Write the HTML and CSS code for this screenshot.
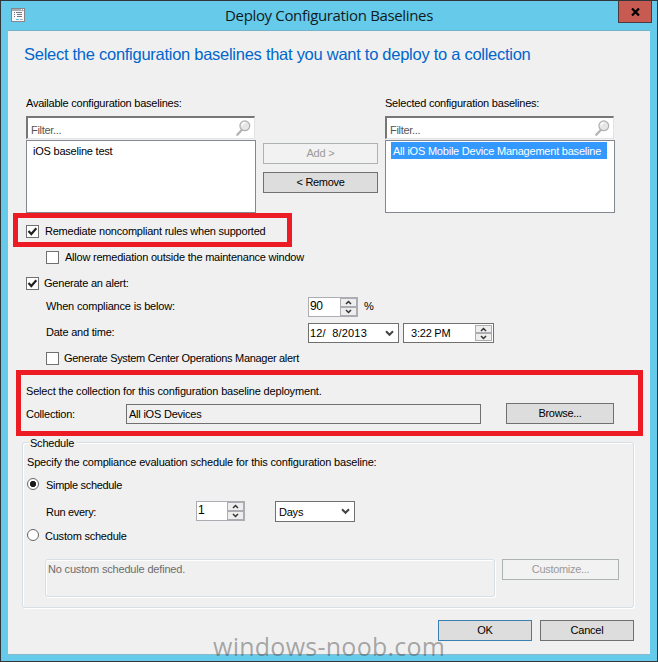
FILE: index.html
```
<!DOCTYPE html>
<html lang="en">
<head>
<meta charset="utf-8">
<title>Deploy Configuration Baselines</title>
<link rel="stylesheet" href="styles.css">
</head>
<body>
<div class="window">
  <header class="titlebar">
    <svg class="app-icon" width="14" height="14" viewBox="0 0 14 14" shape-rendering="crispEdges">
      <rect x=".5" y=".5" width="13" height="13" fill="#f8f8f8" stroke="#85858b"/>
      <path fill="#aaaab0" d="M1 1h12v2H1z"/><path fill="#fff" d="M10 1h1v1h-1zM12 1h1v1h-1z"/>
      <path fill="#77778b" d="M3 4h1v1H3zM5 4h6v1H5zM3 6h1v1H3zM6 6h5v1H6zM3 8h1v1H3zM6 8h5v1H6z"/>
      <path fill="#4fc5ea" d="M5 11h3v1H5z"/><path fill="#b0b0b4" d="M9 11h3v1H9z"/>
    </svg>
    <h1 class="title">Deploy Configuration Baselines</h1>
    <button class="close" aria-label="Close"><svg width="9" height="8" viewBox="0 0 9 8"><path d="M1 0.5 8 7.5M8 .5 1 7.5" stroke="#000" stroke-width="2.2"/></svg></button>
  </header>
  <main class="content">
    <h2 class="heading">Select the configuration baselines that you want to deploy to a collection</h2>

    <section class="pickers">
      <div class="picker">
        <div class="picker-label">Available configuration baselines:</div>
        <div class="filter"><span class="tight">Filter...</span>
          <svg width="15" height="16" viewBox="0 0 15 16"><path d="M6 9.7 1.3 14.7" stroke="#b5b5b5" stroke-width="2.4" stroke-linecap="round"/><circle cx="8.8" cy="5.8" r="4.9" fill="#e6e6e6" stroke="#b0b0b0" stroke-width="1.2"/><path d="M6 5.5Q6.5 3 9 2.8" fill="none" stroke="#fff" stroke-width="1.5"/></svg>
        </div>
        <div class="list"><span class="item first">iOS baseline test</span></div>
      </div>
      <div class="transfer">
        <button class="btn disabled">Add &gt;</button>
        <button class="btn tight">&lt; Remove</button>
      </div>
      <div class="picker">
        <div class="picker-label">Selected configuration baselines:</div>
        <div class="filter"><span class="tight">Filter...</span>
          <svg width="15" height="16" viewBox="0 0 15 16"><path d="M6 9.7 1.3 14.7" stroke="#b5b5b5" stroke-width="2.4" stroke-linecap="round"/><circle cx="8.8" cy="5.8" r="4.9" fill="#e6e6e6" stroke="#b0b0b0" stroke-width="1.2"/><path d="M6 5.5Q6.5 3 9 2.8" fill="none" stroke="#fff" stroke-width="1.5"/></svg>
        </div>
        <div class="list"><span class="item selected">All iOS Mobile Device Management baseline</span></div>
      </div>
    </section>

    <section class="options">
      <label class="row"><span class="check"><svg width="11" height="11" viewBox="0 0 11 11"><path d="M1.5 5 4.3 8 9.3 2.3" fill="none" stroke="#222" stroke-width="2.2"/></svg></span>Remediate noncompliant rules when supported</label>
      <label class="row nested"><span class="check"></span>Allow remediation outside the maintenance window</label>
      <label class="row alert"><span class="check"><svg width="11" height="11" viewBox="0 0 11 11"><path d="M1.5 5 4.3 8 9.3 2.3" fill="none" stroke="#222" stroke-width="2.2"/></svg></span>Generate an alert:</label>
      <div class="row field">
        <span class="field-label wide">When compliance is below:</span>
        <span class="spinner"><span class="value">90</span><span class="arrows"><i><svg width="7" height="5" viewBox="0 0 7 5"><path d="M1 4 3.5 1.5 6 4"/></svg></i><i><svg width="7" height="5" viewBox="0 0 7 5"><path d="M1 1 3.5 3.5 6 1"/></svg></i></span></span>
        <span class="percent">%</span>
      </div>
      <div class="row field">
        <span class="field-label">Date and time:</span>
        <span class="date"><span>12/&nbsp; 8/2013</span><svg class="chevron" width="9" height="7" viewBox="0 0 9 7"><path d="M1 1.3 4.5 4.8 8 1.3"/></svg></span>
        <span class="time"><span>3:22 PM</span><span class="arrows"><i><svg width="7" height="5" viewBox="0 0 7 5"><path d="M1 4 3.5 1.5 6 4"/></svg></i><i><svg width="7" height="5" viewBox="0 0 7 5"><path d="M1 1 3.5 3.5 6 1"/></svg></i></span></span>
      </div>
      <label class="row nested scom tight"><span class="check"></span>Generate System Center Operations Manager alert</label>
    </section>

    <section class="collection">
      <p class="wide">Select the collection for this configuration baseline deployment.</p>
      <div class="collection-row">
        <span class="collection-label">Collection:</span>
        <span class="readonly">All iOS Devices</span>
        <button class="btn tight browse">Browse...</button>
      </div>
    </section>

    <section class="schedule">
      <div class="legend">Schedule</div>
      <p class="wide">Specify the compliance evaluation schedule for this configuration baseline:</p>
      <label class="radio-row tight"><span class="radio on"></span>Simple schedule</label>
      <div class="run-row">
        <span class="run-label tight">Run every:</span>
        <span class="spinner"><span class="value">1</span><span class="arrows"><i><svg width="7" height="5" viewBox="0 0 7 5"><path d="M1 4 3.5 1.5 6 4"/></svg></i><i><svg width="7" height="5" viewBox="0 0 7 5"><path d="M1 1 3.5 3.5 6 1"/></svg></i></span></span>
        <span class="select">Days<svg class="chevron" width="9" height="7" viewBox="0 0 9 7"><path d="M1 1.3 4.5 4.8 8 1.3"/></svg></span>
      </div>
      <label class="radio-row custom"><span class="radio"></span>Custom schedule</label>
      <div class="custom-row">
        <div class="custom-box wide">No custom schedule defined.</div>
        <button class="btn disabled tight customize">Customize...</button>
      </div>
    </section>

    <footer class="actions">
      <button class="btn default">OK</button>
      <button class="btn">Cancel</button>
    </footer>
  </main>
  <div class="mark mark-remediate"></div>
  <div class="mark mark-collection"></div>
  <div class="watermark">windows-noob.com</div>
</div>
</body>
</html>
```
FILE: styles.css
```
* { box-sizing: border-box; }
body { margin: 0; }
h1, h2, p { margin: 0; font-weight: normal; }

.window {
  position: relative;
  width: 658px;
  height: 662px;
  border: 1px solid #30363a;
  background: #66caea;
  padding: 0 7px;
  font: 11px/14px "Liberation Sans", Arial, sans-serif;
  letter-spacing: -0.22px;
  color: #000;
}
.tight { letter-spacing: -0.31px; }
.wide { letter-spacing: -0.175px; }

.titlebar { display: flex; height: 29px; padding-left: 3px; }
.app-icon { margin-top: 7px; }
.title {
  flex: 1;
  padding: 4px 0 0 200px;
  font: 15px/21px "Open Sans", sans-serif;
  letter-spacing: -0.34px;
  color: #101c22;
}
.close {
  width: 34px;
  height: 22px;
  margin-right: -2px;
  padding: 0;
  border: 1px solid #4d3a41;
  border-top: 0;
  background: #c75b52;
  display: flex;
  justify-content: center;
  align-items: center;
}

.content {
  height: 625px;
  background: #f0f0f0;
  border-top: 1px solid #74b3ca;
  border-bottom: 1px solid #8ab9c9;
  padding-left: 14px;
}
.heading {
  height: 64px;
  padding: 13px 0 0 2px;
  font-size: 16.5px;
  line-height: 20px;
  letter-spacing: -0.27px;
  color: #0066cc;
}

.pickers { display: flex; padding-left: 4px; height: 124px; }
.picker { width: 230px; }
.picker-label { height: 21px; padding-top: 1px; }
.filter {
  display: flex;
  justify-content: space-between;
  width: 229px;
  height: 23px;
  padding: 5px 3px 0 3px;
  border: 2px solid;
  border-color: #777 #e3e3e3 #e3e3e3 #777;
  border-right-width: 1px;
  border-bottom-width: 1px;
  background: #fff;
  color: #555;
}
.filter svg { margin-top: -3px; }
.list {
  height: 73px;
  margin-top: 1px;
  padding: 1px 5px;
  border: 1px solid #828790;
  background: #fff;
}
.item { display: inline-block; height: 17px; line-height: 18px; padding: 0 5px 0 2px; }
.item.first { padding-left: 1px; }
.item.selected { background: #3399ff; color: #fff; width: 216px; }

.transfer { width: 115px; margin: 48px 7px 0; display: flex; flex-direction: column; gap: 8px; }
.btn {
  height: 21px;
  padding: 0;
  border: 1px solid #707070;
  background: #ddd;
  color: #000;
  font-family: inherit;
  font-size: 11px;
  line-height: 19px;
  letter-spacing: -0.21px;
}
.btn.tight { letter-spacing: -0.31px; }
.btn.disabled { background: #f2f2f2; border-color: #adb2b5; color: #9a9a9a; }
.btn.default { border-color: #3c7fb1; }

.options { padding-left: 4px; }
.row { display: flex; gap: 6px; height: 26px; padding-top: 6px; line-height: 13px; }
.check {
  width: 13px;
  height: 13px;
  border: 1px solid #707070;
  background: #fff;
}
.check svg { display: block; }
.row.nested { padding-left: 20px; }
.row.alert { gap: 5px; }
.row.scom { padding-top: 3px; height: 21px; gap: 5px; }
.row.field { gap: 0; padding: 0 0 0 20px; }
.field-label { width: 262px; padding-top: 3px; }

.spinner {
  display: flex;
  width: 50px;
  height: 20px;
  border: 1px solid #abadb3;
  background: #fff;
}
.value { flex: 1; padding: 2px 0 0 1px; font-size: 12px; line-height: 13px; letter-spacing: -0.3px; }
.arrows {
  width: 17px;
  height: 18px;
  background: #abadb3;
  padding: 1px;
  display: flex;
  flex-direction: column;
  gap: 2px;
}
.arrows i { flex: 1; display: flex; align-items: center; justify-content: center; background: #eee; }
.arrows path { fill: none; stroke: #333; stroke-width: 1.5; }
.percent { padding: 3px 0 0 6px; }
.date, .time { display: flex; height: 20px; border: 1px solid #707070; background: #fff; line-height: 19px; }
.date { width: 91px; padding: 0 4px 0 1px; justify-content: space-between; align-items: center; letter-spacing: 0.17px; }
.time { width: 91px; margin-left: 4px; padding: 0 1px 0 7px; justify-content: space-between; }
.time .arrows { margin-top: 1px; height: 16px; }
.chevron path { fill: none; stroke: #444; stroke-width: 2; }

.collection { padding: 14px 0 0 4px; height: 66px; }
.collection-row { display: flex; margin-top: 5px; }
.collection-label { width: 100px; padding-top: 4px; }
.readonly { width: 355px; height: 20px; margin-top: 1px; padding: 2px; border: 1px solid #707070; }
.browse { width: 108px; margin-left: 25px; }

.schedule {
  width: 612px;
  height: 166px;
  margin-top: 6px;
  padding-left: 4px;
  border: 1px solid #d5dfe5;
  border-radius: 3px;
  box-shadow: inset 1px 1px #fff, 1px 1px #fff;
}
.legend { width: 48px; height: 14px; margin: -7px 0 0 2px; padding-left: 1px; background: #f0f0f0; }
.schedule p { margin-top: 5px; }
.radio-row { display: flex; gap: 7px; height: 14px; margin-top: 9px; line-height: 15px; }
.radio {
  width: 12px;
  height: 12px;
  border: 1px solid #666;
  border-radius: 50%;
  background: #fff;
}
.radio.on { background: radial-gradient(circle, #1c1c1c 0 2.8px, #fff 3.4px); }
.run-row { display: flex; margin: 9px 0 0 19px; height: 21px; }
.run-label { width: 150px; padding-top: 4px; }
.run-row .spinner { width: 49px; }
.select {
  display: flex;
  justify-content: space-between;
  align-items: center;
  width: 80px;
  height: 21px;
  margin-left: 30px;
  padding: 0 4px 0 3px;
  border: 1px solid #707070;
  background: #fff;
}
.radio-row.custom { margin-top: 7px; gap: 6px; }
.custom-row { display: flex; margin: 16px 0 0 18px; }
.custom-box {
  width: 450px;
  height: 38px;
  padding: 2px;
  border: 1px solid #d5dfe5;
  border-radius: 3px;
  box-shadow: inset 1px 1px #fff, 1px 1px #fff;
  color: #6d6d6d;
}
.customize { width: 117px; margin-left: 7px; }

.actions { display: flex; gap: 8px; margin: 12px 0 0 416px; }
.actions .btn { width: 94px; }

.mark { position: absolute; border: 5px solid #ed1c24; }
.mark-remediate { left: 12px; top: 212px; width: 279px; height: 34px; }
.mark-collection { left: 15px; top: 369px; width: 627px; height: 66px; }
.watermark {
  position: absolute;
  left: 212px;
  top: 632px;
  font: 25px/27px "Open Sans", sans-serif;
  letter-spacing: 0.26px;
  color: rgba(70, 70, 70, 0.45);
}
```
